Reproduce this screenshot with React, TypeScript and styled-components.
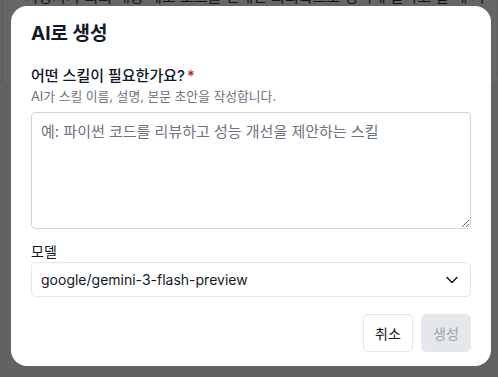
import React from 'react'
import styled, { createGlobalStyle } from 'styled-components'

const GlobalStyle = createGlobalStyle`
  html, body {
    margin: 0;
    padding: 0;
    background: #f3f4f6;
    font-family: Inter, "Noto Sans CJK KR", sans-serif;
    overflow: hidden;
  }
  * { box-sizing: border-box; }
`

const Page = styled.div`
  width: 498px;
  height: 377px;
  padding: 0 0 0 2px;
`

const BgCard = styled.div`
  margin-top: -18px;
  height: 106px;
  background: #ffffff;
  border: 1px solid #e5e7eb;
  border-radius: 12px;
  padding: 0 0 0 22px;
  font-size: 15px;
  line-height: 28px;
  color: #333;
  overflow: hidden;
`

const Overlay = styled.div`
  position: fixed;
  inset: 0;
  background: rgba(0, 0, 0, 0.6);
  display: flex;
  align-items: flex-start;
  justify-content: flex-start;
  padding: 6px 0 0 11px;
`

const Modal = styled.div`
  width: 480px;
  background: #ffffff;
  border-radius: 16px;
  padding: 16px 20px 14px;
  display: flex;
  flex-direction: column;
`

const Title = styled.h2`
  margin: 0 0 20px;
  font-size: 19px;
  line-height: 24px;
  font-weight: 700;
  color: #111827;
`

const Label = styled.div`
  font-size: 15px;
  line-height: 20px;
  font-weight: 500;
  color: #111827;
`

const Required = styled.span`
  color: #b91c1c;
  margin-left: 2px;
`

const Hint = styled.div`
  margin-top: 2px;
  font-size: 12.8px;
  line-height: 17px;
  color: #6b7280;
`

const TextArea = styled.textarea`
  display: block;
  margin-top: 7px;
  width: 100%;
  height: 117px;
  padding: 8px 9px;
  border: 1px solid #d1d5db;
  border-radius: 4px;
  font-family: Inter, "Noto Sans CJK KR", sans-serif;
  font-size: 15px;
  line-height: 22px;
  color: #111827;
  resize: vertical;
  outline: none;
  &::placeholder {
    color: #6b7280;
  }
`

const Field = styled.div`
  margin-top: 13px;
`

const SmallLabel = styled.div`
  font-size: 14px;
  line-height: 20px;
  color: #111827;
`

const Select = styled.div`
  margin-top: 0;
  height: 35px;
  border: 1px solid #e5e7eb;
  border-radius: 5px;
  display: flex;
  align-items: center;
  justify-content: space-between;
  padding: 0 8px 0 9px;
  font-size: 14px;
  color: #111827;
`

const Footer = styled.div`
  margin-top: 17px;
  display: flex;
  justify-content: flex-end;
  gap: 8px;
`

const Button = styled.button<{ $primary?: boolean }>`
  height: 38px;
  width: 50px;
  border-radius: 5px;
  font-family: Inter, "Noto Sans CJK KR", sans-serif;
  font-size: 14px;
  border: 1px solid #e5e7eb;
  background: ${(p) => (p.$primary ? '#e5e7eb' : '#ffffff')};
  color: ${(p) => (p.$primary ? '#9ca3af' : '#111827')};
  padding: 0;
`

const Chevron = () => (
  <svg width="20" height="20" viewBox="0 0 24 24" fill="none" stroke="#111827" strokeWidth="1.8" strokeLinecap="round" strokeLinejoin="round">
    <path d="M6 9l6 6 6-6" />
  </svg>
)

export default function App() {
  return (
    <>
      <GlobalStyle />
      <Page>
        <BgCard>
          <div>사용자가 회의 내용 메모 노트를 전네면 회의록으로 정리해 달라고 할 때 사</div>
          <div>용하는 스킬입니다. 참석자, 논의 내용, 결정 사항을 정리해 주는 어</div>
          <div>시스템 프롬프트 작성 예시 2025년 7</div>
        </BgCard>
      </Page>
      <Overlay>
        <Modal>
          <Title>AI로 생성</Title>
          <Label>
            어떤 스킬이 필요한가요?<Required>*</Required>
          </Label>
          <Hint>AI가 스킬 이름, 설명, 본문 초안을 작성합니다.</Hint>
          <TextArea placeholder="예: 파이썬 코드를 리뷰하고 성능 개선을 제안하는 스킬" />
          <Field>
            <SmallLabel>모델</SmallLabel>
            <Select>
              <span>google/gemini-3-flash-preview</span>
              <Chevron />
            </Select>
          </Field>
          <Footer>
            <Button>취소</Button>
            <Button $primary>생성</Button>
          </Footer>
        </Modal>
      </Overlay>
    </>
  )
}
